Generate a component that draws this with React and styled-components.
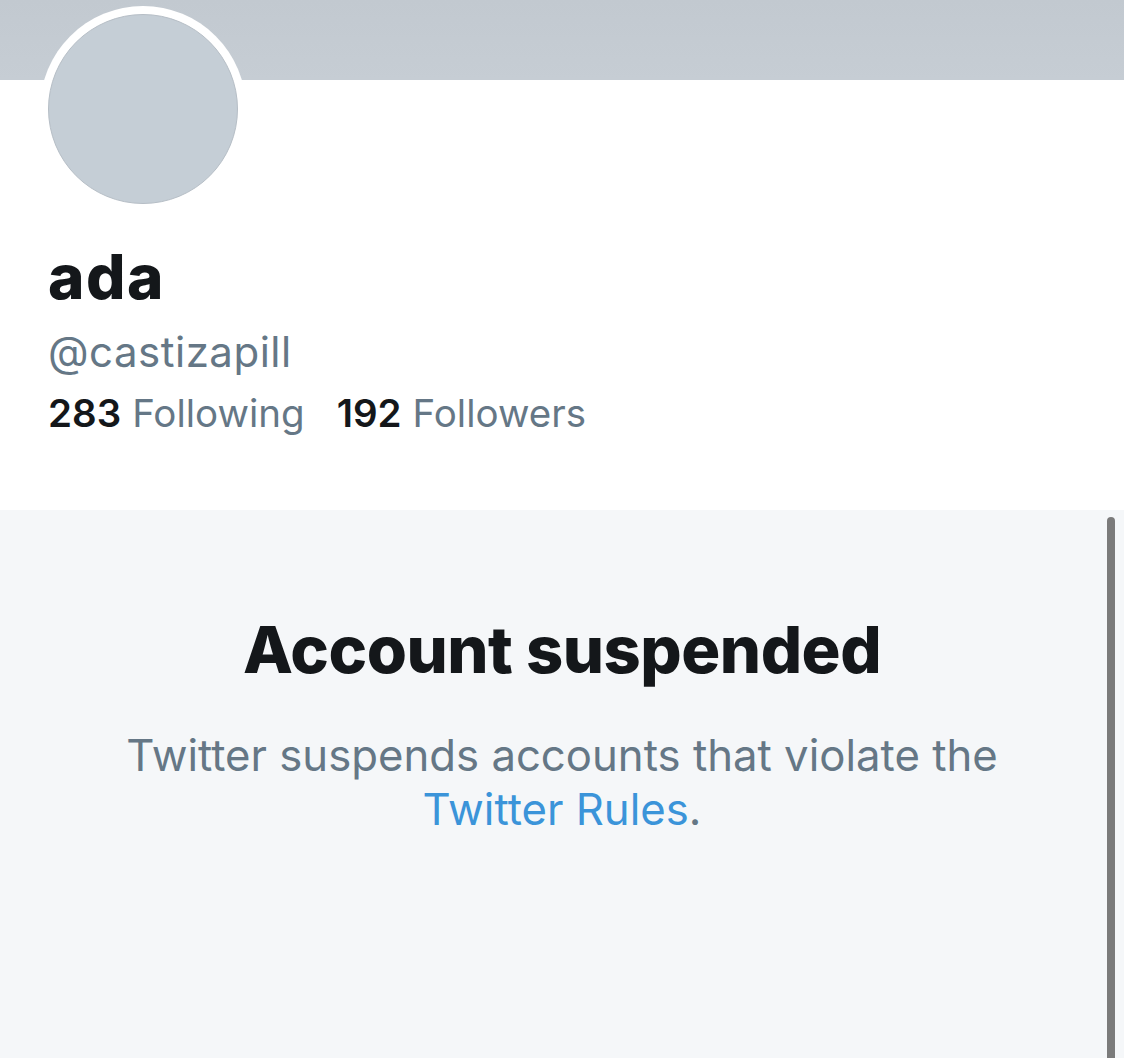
import React from "react";
import styled, { createGlobalStyle } from "styled-components";

const Global = createGlobalStyle`
  html, body { margin: 0; padding: 0; background: #ffffff; }
  body { font-family: Inter, "Noto Sans", sans-serif; -webkit-font-smoothing: antialiased; }
  #root { height: 1058px; overflow: hidden; }
`;

const Page = styled.div`
  width: 1124px;
  height: 1058px;
  display: flex;
  flex-direction: column;
  position: relative;
  overflow: hidden;
`;

const Header = styled.header`
  background: #ffffff;
  height: 510px;
  flex: none;
  display: flex;
  flex-direction: column;
`;

const Banner = styled.div`
  height: 80px;
  flex: none;
  background: linear-gradient(180deg, #c2c9d0 0%, #c6cdd4 100%);
`;

const AvatarRow = styled.div`
  padding-left: 40px;
  margin-top: -74px;
  height: 206px;
`;

const AvatarRing = styled.div`
  width: 206px;
  height: 206px;
  box-sizing: border-box;
  border-radius: 50%;
  background: #ffffff;
  padding: 8px;
`;

const AvatarImage = styled.div`
  width: 100%;
  height: 100%;
  box-sizing: border-box;
  border-radius: 50%;
  background: #c5ced6;
  border: 1px solid #b6bec6;
`;

const Info = styled.div`
  padding: 31px 48px 0;
  display: flex;
  flex-direction: column;
`;

const Name = styled.h1`
  margin: 0;
  font-size: 62px;
  line-height: 68px;
  font-weight: 800;
  color: #14171a;
  letter-spacing: 1.5px;
`;

const Handle = styled.div`
  margin-top: 17px;
  font-size: 42px;
  line-height: 48px;
  color: #657786;
  letter-spacing: 0.5px;
`;

const Stats = styled.div`
  margin-top: 15px;
  display: flex;
  gap: 32px;
  font-size: 38.5px;
  line-height: 44px;
  color: #657786;
`;

const Stat = styled.span`
  display: inline-flex;
  gap: 11px;
`;

const Count = styled.b`
  font-weight: 600;
  color: #14171a;
`;

const Body = styled.main`
  flex: 1;
  background: #f5f7f9;
  display: flex;
  flex-direction: column;
  align-items: center;
  padding-top: 102px;
  text-align: center;
`;

const Title = styled.h2`
  margin: 0;
  font-size: 65px;
  line-height: 76px;
  font-weight: 800;
  color: #14171a;
  letter-spacing: -0.5px;
`;

const Desc = styled.p`
  margin: 41px 0 0;
  font-size: 43.7px;
  line-height: 54px;
  color: #657786;
  max-width: 960px;
`;

const RulesLink = styled.a`
  color: #3b94d9;
  text-decoration: none;
`;

const ScrollThumb = styled.div`
  position: absolute;
  right: 9px;
  top: 517px;
  bottom: -10px;
  width: 8px;
  border-radius: 4px;
  background: #7b7b7b;
`;

export default function App() {
  return (
    <Page>
      <Global />
      <Header>
        <Banner />
        <AvatarRow>
          <AvatarRing>
            <AvatarImage />
          </AvatarRing>
        </AvatarRow>
        <Info>
          <Name>ada</Name>
          <Handle>@castizapill</Handle>
          <Stats>
            <Stat><Count>283</Count>Following</Stat>
            <Stat><Count>192</Count>Followers</Stat>
          </Stats>
        </Info>
      </Header>
      <Body>
        <Title>Account suspended</Title>
        <Desc>
          Twitter suspends accounts that violate the
          <br />
          <RulesLink href="#">Twitter Rules</RulesLink>.
        </Desc>
      </Body>
      <ScrollThumb />
    </Page>
  );
}
